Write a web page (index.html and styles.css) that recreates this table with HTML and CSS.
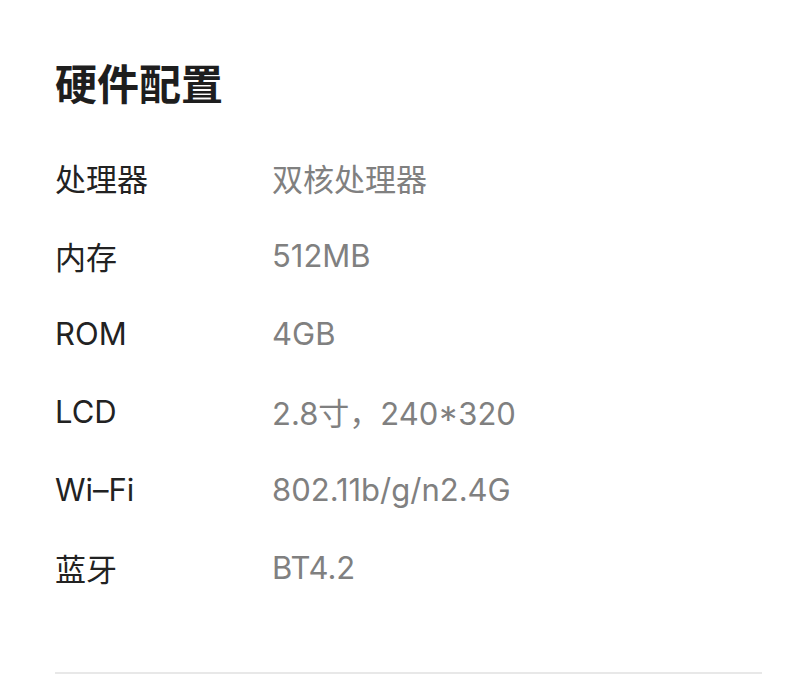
FILE: index.html
```html
<!DOCTYPE html>
<html lang="zh-CN">
<head>
    <meta charset="UTF-8">
    <meta name="viewport" content="width=device-width, initial-scale=1.0">
    <title>硬件配置</title>
    <link rel="stylesheet" href="styles.css">
</head>
<body>
    <div class="spec-page">
        <h1 class="spec-title">硬件配置</h1>

        <div class="spec-list">
            <div class="spec-row">
                <span class="spec-label">处理器</span>
                <span class="spec-value">双核处理器</span>
            </div>
            <div class="spec-row">
                <span class="spec-label">内存</span>
                <span class="spec-value">512MB</span>
            </div>
            <div class="spec-row">
                <span class="spec-label">ROM</span>
                <span class="spec-value">4GB</span>
            </div>
            <div class="spec-row">
                <span class="spec-label">LCD</span>
                <span class="spec-value">2.8寸，240*320</span>
            </div>
            <div class="spec-row">
                <span class="spec-label">Wi–Fi</span>
                <span class="spec-value">802.11b/g/n2.4G</span>
            </div>
            <div class="spec-row">
                <span class="spec-label">蓝牙</span>
                <span class="spec-value">BT4.2</span>
            </div>
        </div>

        <div class="divider"></div>
    </div>
</body>
</html>
```

FILE: styles.css
```css
body {
    margin: 0;
    padding: 0;
    background: #fff;
    font-family: Inter, "Noto Sans CJK SC", sans-serif;
    color: #222;
}

.spec-page {
    padding: 54px 28px 0 55px;
}

.spec-title {
    margin: 0 0 28px;
    font-family: "Noto Sans CJK SC", sans-serif;
    font-size: 42px;
    line-height: 56px;
    font-weight: bold;
    color: #1e1e1e;
}

.spec-row {
    display: flex;
    height: 78px;
    align-items: center;
    font-size: 31px;
}

.spec-label {
    width: 217px;
    flex-shrink: 0;
    color: #222;
}

.spec-value {
    color: #808080;
}

.divider {
    margin-top: 66px;
    height: 2px;
    background: #e8e8e8;
}
```
